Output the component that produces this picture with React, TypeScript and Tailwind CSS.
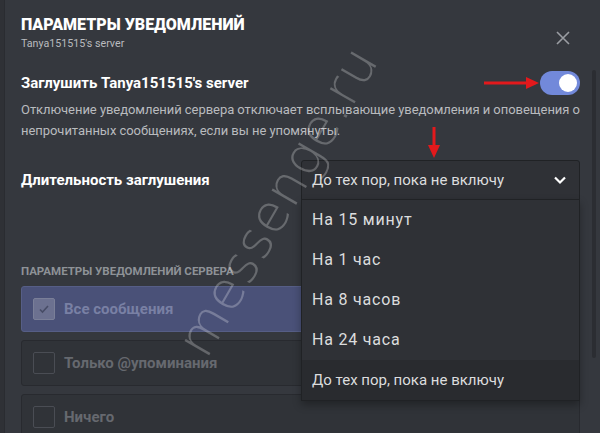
import React from "react";

const font = { fontFamily: 'Roboto, "Open Sans", sans-serif' };

function Card({ label, selected }: { label: string; selected?: boolean }) {
  return (
    <div
      className={
        "flex h-[46px] items-center rounded-[3px] border pl-[11px] " +
        (selected ? "border-[#565e86] bg-[#4a5178]" : "border-[#282a2f] bg-[#303338]")
      }
    >
      <div
        className={
          "flex h-[22px] w-[22px] items-center justify-center rounded-[2px] border " +
          (selected ? "border-[#7a7f98] bg-[#6c7190]" : "border-[#4a4d54] bg-transparent")
        }
      >
        {selected && (
          <svg width="14" height="14" viewBox="0 0 14 14">
            <path d="M3 7.5l2.5 2.5L11 4" fill="none" stroke="#474c66" strokeWidth="1.6" />
          </svg>
        )}
      </div>
      <span
        className={
          "ml-[9px] text-[15px] font-bold " + (selected ? "text-[#7980a4]" : "text-[#66696f]")
        }
      >
        {label}
      </span>
    </div>
  );
}

export default function App() {
  const items = ["На 15 минут", "На 1 час", "На 8 часов", "На 24 часа"];
  return (
    <div style={font} className="relative flex h-[433px] w-[600px] overflow-hidden bg-[#35383e]">
      <div className="w-[5px] shrink-0 border-r border-[#2a2c31] bg-[#2f3136]" />
      <div className="flex w-[575px] flex-col pl-[16px]">
        {/* header */}
        <div className="flex items-start justify-between pt-[13px]">
          <div className="flex flex-col">
            <div className="text-[16px] font-black leading-[24px] text-white">ПАРАМЕТРЫ УВЕДОМЛЕНИЙ</div>
            <div className="text-[10.7px] leading-[14px] text-[#b9bbbe]">Tanya151515's server</div>
          </div>
          <svg className="mr-[9px] mt-[17px]" width="16" height="16" viewBox="0 0 16 16">
            <path d="M2 2L14 14M14 2L2 14" stroke="#9a9da3" strokeWidth="1.6" />
          </svg>
        </div>

        {/* mute row */}
        <div className="mt-[20px] flex items-center justify-between">
          <div className="text-[15px] font-bold leading-[20px] text-white">Заглушить Tanya151515's server</div>
          <div className="relative flex h-[24px] w-[40px] items-center justify-end rounded-full bg-[#7289da] pr-[3px]">
            <div className="h-[18px] w-[18px] rounded-full bg-white" />
          </div>
        </div>
        <div className="mt-[4px] whitespace-nowrap text-[13px] leading-[21px] tracking-[-0.05px] text-[#b9bbbe]">
          Отключение уведомлений сервера отключает всплывающие уведомления и оповещения о
          <br />
          непрочитанных сообщениях, если вы не упомянуты.
        </div>

        {/* duration row */}
        <div className="relative mt-[19px] flex items-center justify-between">
          <div className="text-[15px] font-bold leading-[22px] text-white">Длительность заглушения</div>
          <div className="flex h-[40px] w-[279px] items-center justify-between rounded-t-[3px] border border-[#202225] bg-[#2f3136] pl-[10px] pr-[12px]">
            <span className="text-[15px] text-[#dcddde]">До тех пор, пока не включу</span>
            <svg width="14" height="10" viewBox="0 0 14 10">
              <path d="M2 2.5L7 7.5L12 2.5" fill="none" stroke="#ffffff" strokeWidth="2.2" />
            </svg>
          </div>
          <div className="absolute right-0 top-[39px] z-10 flex w-[279px] flex-col border border-[#202225] bg-[#2f3136] shadow-[0_4px_8px_rgba(0,0,0,0.3)]">
            {items.map((t) => (
              <div key={t} className="flex h-[40px] items-center pl-[10px] text-[16px] tracking-[0.8px] text-[#dcddde]">
                {t}
              </div>
            ))}
            <div className="flex h-[40px] items-center bg-[#292b2f] pl-[10px] text-[15px] text-[#dcddde]">
              До тех пор, пока не включу
            </div>
          </div>
        </div>

        <div className="mt-[20px] h-px bg-[#42454b]" />

        <div className="mt-[43px] text-[11.5px] font-bold uppercase leading-[16px] text-[#8e9297]">
          Параметры уведомлений сервера
        </div>
        <div className="mt-[7px] flex flex-col gap-[8px]">
          <Card label="Все сообщения" selected />
          <Card label="Только @упоминания" />
          <Card label="Ничего" />
        </div>
      </div>
      {/* scrollbar */}
      <div className="ml-[12px] mt-[70px] h-[288px] w-[4px] rounded-full bg-[#2b2d32]" />

      {/* red arrows */}
      <svg className="pointer-events-none absolute left-[484px] top-[77px]" width="56" height="12" viewBox="0 0 56 12">
        <path d="M0 6H44" stroke="#e3191c" strokeWidth="3" />
        <path d="M42 0L55 6L42 12Z" fill="#e3191c" />
      </svg>
      <svg className="pointer-events-none absolute left-[428px] top-[127px]" width="12" height="32" viewBox="0 0 12 32">
        <path d="M6 0V20" stroke="#e3191c" strokeWidth="3" />
        <path d="M0 18L6 31L12 18Z" fill="#e3191c" />
      </svg>

      {/* watermark */}
      <div
        className="pointer-events-none absolute left-[104px] top-[162px] z-20 -rotate-[60deg] text-[52px] font-light tracking-[1px] text-white/25"
        style={{ fontFamily: '"DejaVu Sans", sans-serif' }}
      >
        messenge.ru
      </div>
    </div>
  );
}
